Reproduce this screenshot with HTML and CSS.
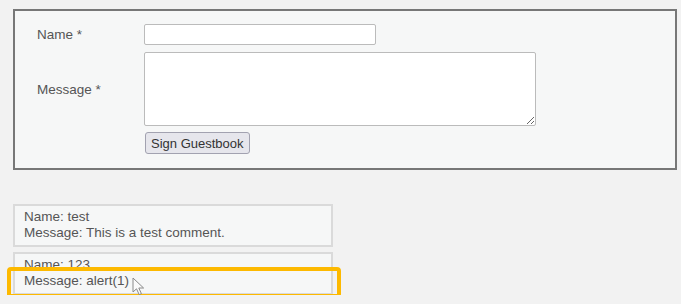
FILE: index.html
```html
<!DOCTYPE html>
<html lang="en">
<head>
    <meta charset="UTF-8">
    <meta name="viewport" content="width=device-width, initial-scale=1.0">
    <title>Guestbook</title>
    <link rel="stylesheet" href="styles.css">
</head>
<body>
    <form class="guestbook-form">
        <label class="field-label" for="name">Name *</label>
        <input type="text" id="name" class="name-input">

        <label class="field-label" for="message">Message *</label>
        <textarea id="message" class="message-input"></textarea>

        <span></span>
        <div class="form-actions">
            <button type="button" class="sign-button">Sign Guestbook</button>
        </div>
    </form>

    <div class="comments">
        <div class="comment">
            <div>Name: test</div>
            <div>Message: This is a test comment.</div>
        </div>
        <div class="comment">
            <div>Name: 123</div>
            <div>Message: alert(1)</div>
            <div class="highlight">
                <svg class="cursor" width="14" height="19" viewBox="0 0 14 19">
                    <path d="M1 1 L1 15 L4.5 11.8 L7.2 17.6 L9.4 16.6 L6.8 11 L11.6 11 Z" fill="#fafafa" stroke="#8a8a8a" stroke-width="1" stroke-linejoin="round"/>
                </svg>
            </div>
        </div>
    </div>
</body>
</html>
```

FILE: styles.css
```css
body {
    margin: 0;
    padding: 9px 5px 0 13px;
    background-color: #f2f2f2;
    font-family: 'Liberation Sans', Arial, sans-serif;
    font-size: 13.5px;
    color: #555;
}

.guestbook-form {
    box-sizing: border-box;
    width: 664px;
    display: grid;
    grid-template-columns: 107px 1fr;
    align-items: center;
    row-gap: 7px;
    padding: 13px 22px 14px;
    background-color: #f6f7f7;
    border: 2px solid #777; /* dark frame */
}

.field-label {
    color: #555;
}

.name-input, .message-input {
    box-sizing: border-box;
    margin: 0;
    background-color: #fff;
    border: 1px solid #bbb;
    border-radius: 2px;
    font-family: inherit;
}
.name-input {
    width: 232px;
    height: 21px;
}
.message-input {
    width: 392px;
    height: 74px;
}

.form-actions {
    margin-top: -1px;
}
.sign-button {
    box-sizing: border-box;
    height: 22px;
    margin: 0 0 0 1px;
    padding: 1px 5px;
    font-family: inherit;
    font-size: 13px;
    color: #333;
    background-color: #e6e6ec;
    border: 1px solid #a2a2b0;
    border-radius: 3px;
}

.comments {
    margin-top: 34px;
    display: flex;
    flex-direction: column;
    gap: 5px;
}
.comment {
    position: relative;
    box-sizing: border-box;
    width: 320px;
    height: 43px;
    padding: 3px 9px 0;
    line-height: 16px;
    background-color: #f6f7f7;
    border: 2px solid #dadada;
}

/* yellow call-out drawn over the second comment */
.highlight {
    position: absolute;
    left: -8px;
    top: 13px;
    width: 334px;
    height: 31px;
    box-sizing: border-box;
    border: 4px solid #fdb900;
    border-radius: 4px;
}
.cursor {
    position: absolute;
    left: 121px;
    top: 6px;
}
```
